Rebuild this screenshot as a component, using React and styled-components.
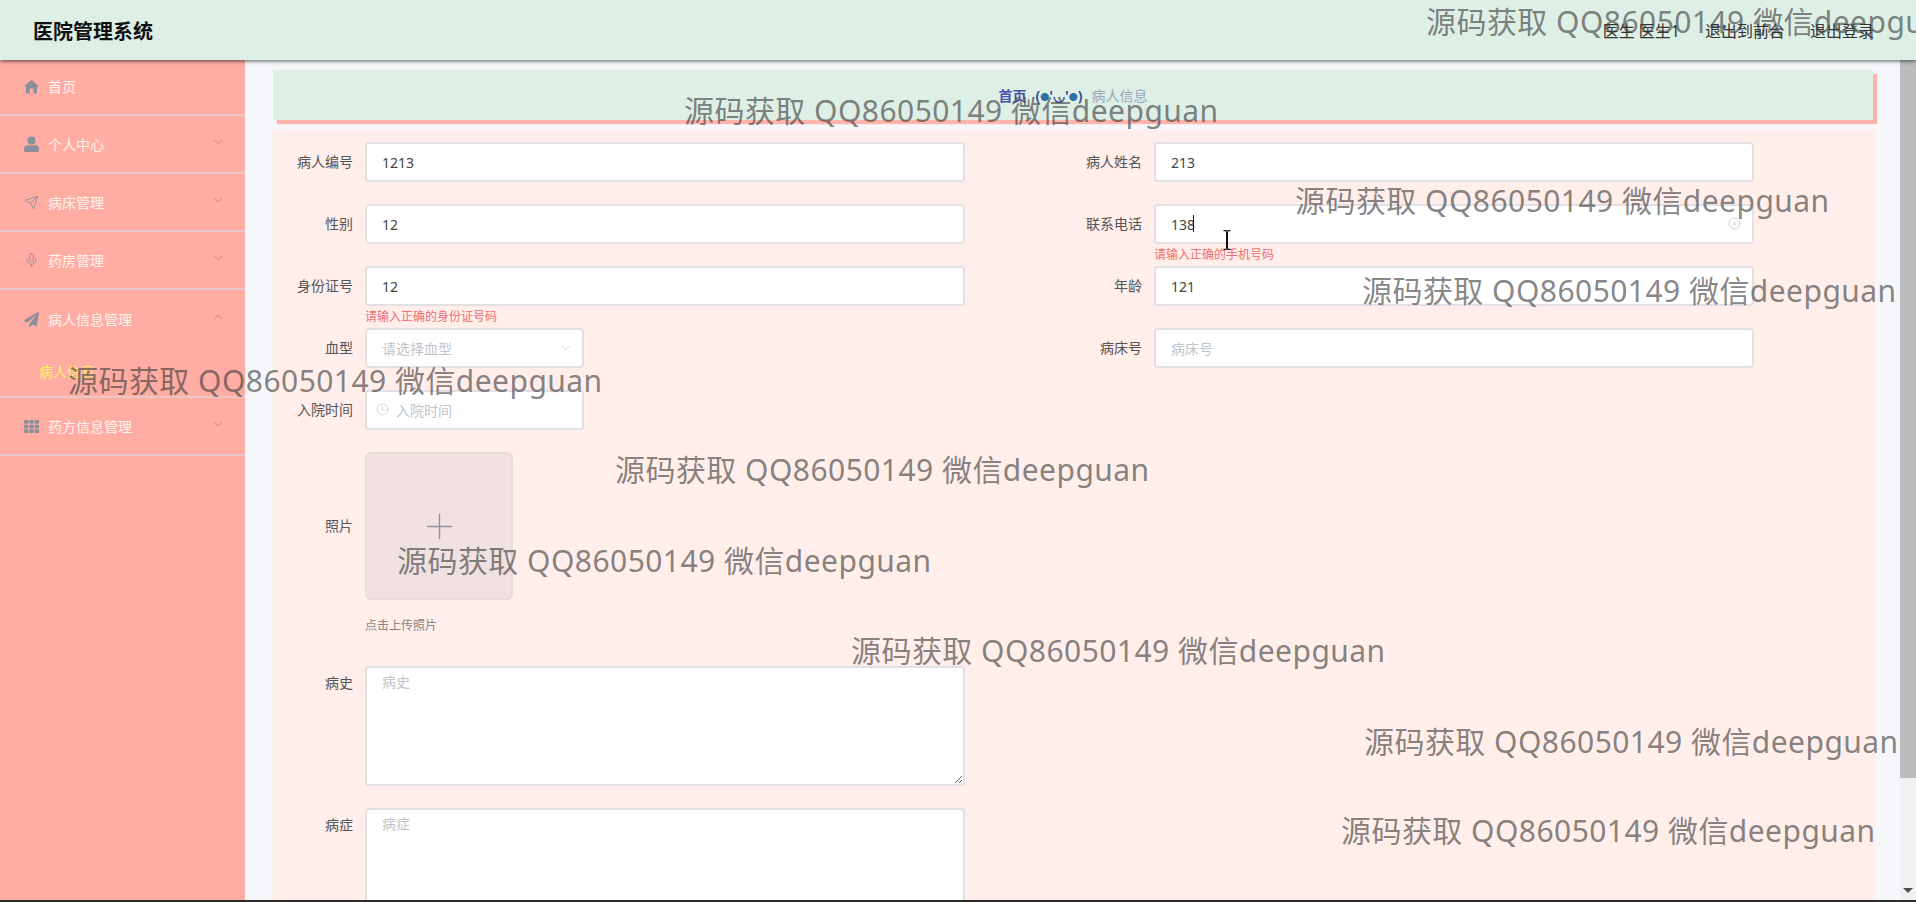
import React from 'react'
import styled, { createGlobalStyle } from 'styled-components'
import { ChevronDown, ChevronUp, Send, Mic, Clock, Plus, CircleX } from 'lucide-react'
import { FaPaperPlane, FaTh } from 'react-icons/fa'

const GlobalStyle = createGlobalStyle`
    html, body {
        margin: 0;
        padding: 0;
        height: 100%;
        overflow: hidden;
        font-family: "Noto Sans", "Noto Sans CJK SC", sans-serif;
    }
    * {
        box-sizing: border-box;
    }
`

const Shell = styled.div`
    position: relative;
    height: 100vh;
    display: flex;
    flex-direction: column;
    overflow: hidden;
`

const Header = styled.header`
    height: 60px;
    flex: none;
    background: #deefe6;
    box-shadow: 0 1px 4px rgba(0, 0, 0, .65);
    display: flex;
    align-items: center;
    justify-content: space-between;
    padding: 0 42px 0 33px;
    position: relative;
    z-index: 2;
`

const Title = styled.div`
    font-size: 20px;
    font-weight: 700;
    color: #111;
`

const HeaderNav = styled.nav`
    display: flex;
    gap: 25px;
    font-size: 16px;
    color: #333;
`

const Body = styled.div`
    flex: 1;
    display: flex;
    min-height: 0;
`

const BottomEdge = styled.div`
    height: 2px;
    flex: none;
    background: #2b2b2b;
`

const Sidebar = styled.aside`
    width: 245px;
    flex: none;
    background: #ffada2;
    margin-top: -2px;
`

const MenuItem = styled.div`
    height: ${p => p.$sub ? 50 : 58}px;
    padding: ${p => p.$sub ? '0 0 2px 39px' : '0 20px 0 24px'};
    border-bottom: ${p => p.$open ? 'none' : '2px solid #eac6c8'};
    display: flex;
    align-items: center;
    font-size: 14px;
    color: ${p => p.$sub ? '#fff06a' : '#fff3ee'};
`

const MenuIcon = styled.span`
    width: 15px;
    height: 16px;
    margin-right: 9px;
    display: flex;
    align-items: center;
    justify-content: center;
    color: #8b8f9b;
`

const MenuArrow = styled.span`
    margin-left: auto;
    margin-bottom: 4px;
    display: flex;
    color: #e57470;
`

const Main = styled.main`
    flex: 1;
    min-width: 0;
    height: 100%;
    overflow: hidden;
    background: #f5f7fa;
    padding: 10px 25px 10px 28px;
`

const ScrollBar = styled.div`
    width: 16px;
    flex: none;
    background: #f1f1f1;
    display: flex;
    flex-direction: column;
    align-items: center;
`

const ScrollThumb = styled.div`
    width: 100%;
    height: 718px;
    background: #bcbcbc;
`

const ScrollArrow = styled.div`
    margin-top: auto;
    margin-bottom: 7px;
    border-left: 5px solid transparent;
    border-right: 5px solid transparent;
    border-top: 5px solid #505050;
`

const Crumbs = styled.div`
    height: 50px;
    margin-right: 2px;
    background: #deefe6;
    box-shadow: 4px 4px 1px #ffb4ab;
    display: flex;
    align-items: center;
    justify-content: center;
    font-size: 14px;
`

const CrumbHome = styled.span`
    color: #4a50ae;
    font-weight: 700;
`

const CrumbFace = styled.span`
    color: #3a4f9e;
    font-weight: 700;
    margin: 0 9px;
    white-space: nowrap;
`

const CrumbDot = styled.span`
    color: #2f6fa8;
    font-size: 9px;
    vertical-align: 1px;
`

const CrumbCurrent = styled.span`
    color: #97a8be;
`

const FormCard = styled.section`
    margin-top: 10px;
    background: #ffeeea;
    padding: 12px 11px 20px;
    display: grid;
    grid-template-columns: 789px 789px;
    row-gap: 22px;
`

const Item = styled.div`
    display: flex;
    align-items: ${p => p.$top ? 'flex-start' : 'stretch'};
    grid-column: ${p => p.$wide ? '1 / -1' : 'auto'};
    min-height: 40px;
`

const Label = styled.label`
    width: 81px;
    flex: none;
    padding-right: 12px;
    text-align: right;
    font-size: 14px;
    color: #555;
    line-height: ${p => p.$tall ? '148px' : p.$area ? '34px' : '40px'};
`

const Field = styled.div`
    position: relative;
    width: ${p => p.$w || 600}px;
`

const Input = styled.input`
    width: 100%;
    height: 40px;
    border: 2px solid #e2dfe5;
    border-radius: 4px;
    background: #fff;
    padding: 0 15px;
    font: inherit;
    font-size: 14px;
    color: #444;
    outline: none;

    &::placeholder {
        color: #c0c4cc;
    }
`

const Caret = styled.span`
    position: absolute;
    left: 39px;
    top: 11px;
    width: 1px;
    height: 17px;
    background: #222;
`

const ClearIcon = styled.span`
    position: absolute;
    right: 13px;
    top: 13px;
    display: flex;
    color: #b4b8bf;
`

const FieldError = styled.div`
    position: absolute;
    left: 0;
    top: 100%;
    padding-top: 3px;
    font-size: 12px;
    line-height: 16px;
    color: #ee6f70;
    white-space: nowrap;
`

const SelectBox = styled.div`
    height: 40px;
    border: 2px solid #e2dfe5;
    border-radius: 4px;
    background: #fff;
    padding: 0 9px 0 15px;
    display: flex;
    align-items: center;
    justify-content: space-between;
    font-size: 14px;
    color: #c0c4cc;
`

const DateBox = styled(SelectBox)`
    justify-content: flex-start;
    padding-left: 9px;
    padding-bottom: 1px;
    gap: 7px;
`

const UploadBox = styled.div`
    width: 148px;
    height: 148px;
    background: #efe2e1;
    border: 2px solid #e6dcdc;
    border-radius: 6px;
    display: flex;
    align-items: center;
    justify-content: center;
    color: #8c939d;
`

const UploadHint = styled.div`
    margin-top: 16px;
    padding-bottom: 8px;
    font-size: 12px;
    line-height: 20px;
    color: #8a8585;
`

const TextArea = styled.textarea`
    display: block;
    width: 100%;
    height: 120px;
    border: 2px solid #e2dfe5;
    border-radius: 4px;
    background: #fff;
    padding: 3px 15px;
    font: inherit;
    font-size: 14px;
    line-height: 21px;
    outline: none;

    &::placeholder {
        color: #c0c4cc;
    }
`

const Overlay = styled.div`
    position: absolute;
    inset: 0;
    z-index: 5;
    pointer-events: none;
`

const Watermark = styled.div`
    position: absolute;
    left: ${p => p.$x}px;
    top: ${p => p.$y - 20}px;
    font-size: 30px;
    line-height: 40px;
    letter-spacing: .45px;
    white-space: nowrap;
    color: rgba(55, 55, 55, .62);
`

const MouseCursor = styled.svg`
    position: absolute;
    left: 1223px;
    top: 230px;
`

const HomeIcon = () => (
    <svg width="15" height="15" viewBox="0 0 15 15" fill="currentColor">
        <path d="M7.5 .8 L15 7.4 L13 7.4 L13 14.4 L9.4 14.4 L9.4 9.6 L5.6 9.6 L5.6 14.4 L2 14.4 L2 7.4 L0 7.4 Z" />
    </svg>
)

const UserIcon = () => (
    <svg width="15" height="16" viewBox="0 0 15 16" fill="currentColor">
        <circle cx="7.5" cy="4.4" r="4" />
        <path d="M0 12.5 C0 10 2 9.2 4 9.2 L11 9.2 C13 9.2 15 10 15 12.5 L15 15 C15 15.6 14.6 16 14 16 L1 16 C.4 16 0 15.6 0 15 Z" />
    </svg>
)

const menuTop = [
    { name: '首页', icon: <HomeIcon /> },
    { name: '个人中心', icon: <UserIcon />, arrow: true },
    { name: '病床管理', icon: <Send size={15} strokeWidth={1.4} />, arrow: true },
    { name: '药房管理', icon: <Mic size={16} strokeWidth={1.4} />, arrow: true },
]

const marks = [
    [1426, 22], [684, 111], [1295, 201], [1362, 291], [68, 381],
    [615, 470], [397, 561], [851, 651], [1364, 742], [1341, 831],
]

const TextItem = ({ label, value, placeholder }) => (
    <Item>
        <Label>{label}</Label>
        <Field>
            <Input readOnly value={value || ''} placeholder={placeholder} />
        </Field>
    </Item>
)

export default function App() {
    return (
        <Shell>
            <GlobalStyle />
            <Header>
                <Title>医院管理系统</Title>
                <HeaderNav>
                    <span>医生 医生1</span>
                    <span>退出到前台</span>
                    <span>退出登录</span>
                </HeaderNav>
            </Header>
            <Body>
                <Sidebar>
                    {menuTop.map(m => (
                        <MenuItem key={m.name}>
                            <MenuIcon>{m.icon}</MenuIcon>
                            {m.name}
                            {m.arrow && <MenuArrow><ChevronDown size={14} strokeWidth={1.6} /></MenuArrow>}
                        </MenuItem>
                    ))}
                    <MenuItem $open>
                        <MenuIcon><FaPaperPlane size={15} /></MenuIcon>
                        病人信息管理
                        <MenuArrow><ChevronUp size={14} strokeWidth={1.6} /></MenuArrow>
                    </MenuItem>
                    <MenuItem $sub>病人信息</MenuItem>
                    <MenuItem>
                        <MenuIcon><FaTh size={15} /></MenuIcon>
                        药方信息管理
                        <MenuArrow><ChevronDown size={14} strokeWidth={1.6} /></MenuArrow>
                    </MenuItem>
                </Sidebar>
                <Main>
                    <Crumbs>
                        <CrumbHome>首页</CrumbHome>
                        <CrumbFace>(<CrumbDot>●</CrumbDot>'◡'<CrumbDot>●</CrumbDot>)</CrumbFace>
                        <CrumbCurrent>病人信息</CrumbCurrent>
                    </Crumbs>
                    <FormCard>
                        <TextItem label="病人编号" value="1213" />
                        <TextItem label="病人姓名" value="213" />
                        <TextItem label="性别" value="12" />
                        <Item>
                            <Label>联系电话</Label>
                            <Field>
                                <Input readOnly value="138" />
                                <Caret />
                                <ClearIcon><CircleX size={13} strokeWidth={1.2} /></ClearIcon>
                                <FieldError>请输入正确的手机号码</FieldError>
                            </Field>
                        </Item>
                        <Item>
                            <Label>身份证号</Label>
                            <Field>
                                <Input readOnly value="12" />
                                <FieldError>请输入正确的身份证号码</FieldError>
                            </Field>
                        </Item>
                        <TextItem label="年龄" value="121" />
                        <Item>
                            <Label>血型</Label>
                            <Field $w={219}>
                                <SelectBox>
                                    请选择血型
                                    <ChevronDown size={14} strokeWidth={1.2} />
                                </SelectBox>
                            </Field>
                        </Item>
                        <TextItem label="病床号" placeholder="病床号" />
                        <Item $wide>
                            <Label>入院时间</Label>
                            <Field $w={219}>
                                <DateBox>
                                    <Clock size={13} strokeWidth={1.3} />
                                    入院时间
                                </DateBox>
                            </Field>
                        </Item>
                        <Item $wide $top>
                            <Label $tall>照片</Label>
                            <Field>
                                <UploadBox><Plus size={41} strokeWidth={.8} /></UploadBox>
                                <UploadHint>点击上传照片</UploadHint>
                            </Field>
                        </Item>
                        <Item $wide $top>
                            <Label $area>病史</Label>
                            <Field><TextArea readOnly placeholder="病史" /></Field>
                        </Item>
                        <Item $wide $top>
                            <Label $area>病症</Label>
                            <Field><TextArea readOnly placeholder="病症" /></Field>
                        </Item>
                    </FormCard>
                </Main>
                <ScrollBar>
                    <ScrollThumb />
                    <ScrollArrow />
                </ScrollBar>
            </Body>
            <BottomEdge />
            <Overlay>
                {marks.map(([x, y]) => (
                    <Watermark key={x} $x={x} $y={y}>源码获取 QQ86050149 微信deepguan</Watermark>
                ))}
                <MouseCursor width="8" height="20" viewBox="0 0 8 20" fill="none" stroke="#111">
                    <path d="M.5 .7 H3 L4 1.7 L5 .7 H7.5 M4 1.7 V18.3 M.5 19.3 H3 L4 18.3 L5 19.3 H7.5" strokeWidth="1.2" />
                    <path d="M4 2 V18" strokeWidth="2" />
                </MouseCursor>
            </Overlay>
        </Shell>
    )
}
